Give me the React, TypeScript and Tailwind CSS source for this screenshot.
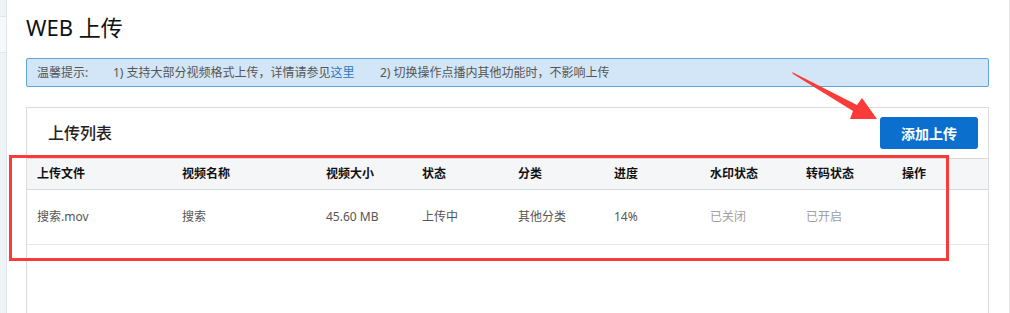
const columns = ["上传文件", "视频名称", "视频大小", "状态", "分类", "进度", "水印状态", "转码状态", "操作"];

const row = [
  { text: "搜索.mov", muted: false },
  { text: "搜索", muted: false },
  { text: "45.60 MB", muted: false },
  { text: "上传中", muted: false },
  { text: "其他分类", muted: false },
  { text: "14%", muted: false },
  { text: "已关闭", muted: true },
  { text: "已开启", muted: true },
  { text: "", muted: false },
];

const gridCols = "grid grid-cols-[145px_144px_96px_96px_96px_96px_96px_96px_1fr]";

export default function App() {
  return (
    <div className="relative flex h-[313px] w-[1010px] overflow-hidden bg-white font-['Noto_Sans','Noto_Sans_CJK_SC',sans-serif] text-[#333]">
      {/* collapsed side nav */}
      <aside className="flex w-[7px] flex-col border-r border-[#dfe5e8] bg-[#eef3f5]">
        <div className="h-[17px] border-b border-[#dfe5e8]" />
        <div className="h-[36px] border-b border-[#dfe5e8] bg-[#f6f9fa]" />
        <div className="flex-1" />
      </aside>

      <main className="flex-1 pl-[19px] pr-[20px]">
        <h1 className="pt-[12px] text-[22px] leading-[30px] text-[#111]">WEB 上传</h1>

        <div className="mt-[16px] flex h-[29px] items-center rounded-[2px] border border-[#62a5de] bg-[#d3e6f7] pl-[10px] text-[12px] text-[#555]">
          <span className="w-[76px]">温馨提示:</span>
          <span className="w-[267px]">
            1) 支持大部分视频格式上传，详情请参见<a className="text-[#2b77bd]">这里</a>
          </span>
          <span>2) 切换操作点播内其他功能时，不影响上传</span>
        </div>

        <section className="mt-[20px] h-[220px] border border-[#dcdcdc]">
          <div className="flex items-center justify-between pb-[9px] pl-[21px] pr-[10px] pt-[9px]">
            <h2 className="text-[16px] font-medium text-[#222]">上传列表</h2>
            <button className="h-[32px] w-[98px] rounded-[3px] bg-[#0a6fcd] text-[14px] font-bold text-white">
              添加上传
            </button>
          </div>

          <div className={`${gridCols} h-[32px] items-center border-y border-[#d8d8d8] bg-[#f5f6f8] text-[12px] font-bold text-[#111]`}>
            {columns.map((c) => (
              <div key={c} className="pl-[10px]">{c}</div>
            ))}
          </div>
          <div className={`${gridCols} h-[55px] items-center border-b border-[#e3e8ef] text-[12px]`}>
            {row.map((c, i) => (
              <div key={i} className={`pl-[10px] ${c.muted ? "text-[#a0a0a0]" : "text-[#555]"}`}>{c.text}</div>
            ))}
          </div>
        </section>
      </main>

      <div className="w-px bg-[#e6e6e6]" />

      {/* annotations */}
      <div className="pointer-events-none absolute left-[9px] top-[155px] h-[106px] w-[940px] border-[3px] border-[#fb3a3a]" />
      <svg className="pointer-events-none absolute left-0 top-0" width="1010" height="313">
        <polygon
          points="792,72 857,105 862,98 877,119 850,119 853,111 793,74"
          fill="#fb3a3a"
        />
      </svg>
    </div>
  );
}
